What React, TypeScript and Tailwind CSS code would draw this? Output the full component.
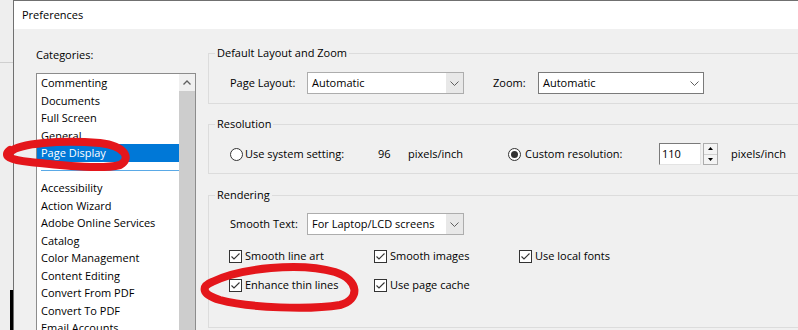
import React from 'react';

const categoriesTop = ['Commenting', 'Documents', 'Full Screen', 'General'];
const categoriesRest = [
  'Accessibility',
  'Action Wizard',
  'Adobe Online Services',
  'Catalog',
  'Color Management',
  'Content Editing',
  'Convert From PDF',
  'Convert To PDF',
  'Email Accounts',
];

const Chevron = () => (
  <svg width="9" height="5" viewBox="0 0 9 5">
    <path d="M0.5 0.5 L4.5 4.5 L8.5 0.5" stroke="#5f5f5f" fill="none" />
  </svg>
);

const Select: React.FC<{ value: string; width: string; shaded?: boolean }> = ({ value, width, shaded }) => (
  <div className={`${width} h-[22px] flex border ${shaded ? 'border-[#adadad]' : 'border-[#7a7a7a]'} bg-white`}>
    <div className="flex-1 pl-[4px] flex items-center leading-[16px]">{value}</div>
    <div className={`w-[17px] flex items-center justify-center ${shaded ? 'bg-[#e8e8e8]' : ''}`}>
      <Chevron />
    </div>
  </div>
);

const Checkbox: React.FC<{ label: string }> = ({ label }) => (
  <div className="w-[145px] h-[20px] flex items-center">
    <div className="w-[13px] h-[13px] border border-[#333333] bg-white flex items-center justify-center">
      <svg width="11" height="11" viewBox="0 0 11 11">
        <path d="M1.5 5.5 L4 8 L9.5 2.5" stroke="#333333" strokeWidth="1.1" fill="none" />
      </svg>
    </div>
    <span className="ml-[3px] leading-[16px]">{label}</span>
  </div>
);

const Radio: React.FC<{ checked?: boolean }> = ({ checked }) => (
  <div className="w-[13px] h-[13px] rounded-full border border-[#333333] bg-white flex items-center justify-center">
    {checked && <div className="w-[7px] h-[7px] rounded-full bg-[#333333]" />}
  </div>
);

export default function App() {
  return (
    <div className="relative w-[798px] h-[330px] overflow-hidden flex bg-[#f0f0f0] text-[11px] text-black font-['Open_Sans',sans-serif]">
      {/* desktop strip behind the dialog */}
      <div className="w-[13px] shrink-0 flex flex-col bg-[#eeeeee]">
        <div className="h-[62px] shrink-0" />
        <div className="h-px shrink-0 bg-[#cfcfcf]" />
        <div className="h-[227px] shrink-0" />
        <div className="ml-[10px] w-[3px] flex-1 bg-black" />
      </div>

      <div className="flex-1 min-h-0 flex flex-col border-l border-t border-[#707070]">
        {/* title bar */}
        <div className="h-[28px] shrink-0 bg-white pl-[8px] flex items-center">Preferences</div>

        <div className="flex-1 min-h-0 overflow-hidden flex">
          {/* categories */}
          <div className="w-[194px] shrink-0 pl-[22px]">
            <div className="mt-[18px] leading-[16px]">Categories:</div>
            <div className="mt-[10px] w-[160px] h-[300px] border border-[#8c8c8c] bg-white flex">
              <div className="w-[142px] leading-[17.5px]">
                {categoriesTop.map((c) => (
                  <div key={c} className="h-[17.5px] pl-[4px]">{c}</div>
                ))}
                <div className="h-[17.5px] pl-[4px] bg-[#0078d7] text-white">Page Display</div>
                <div className="h-[17.5px] pl-[4px] pt-[8px]">
                  <div className="h-px bg-[#5aa9e6]" />
                </div>
                {categoriesRest.map((c) => (
                  <div key={c} className="h-[17.5px] pl-[4px] whitespace-nowrap">{c}</div>
                ))}
              </div>
              <div className="w-[16px] flex flex-col bg-[#f0f0f0]">
                <div className="h-[17px] flex items-center justify-center">
                  <svg width="8" height="5" viewBox="0 0 8 5">
                    <path d="M0.5 4.5 L4 1 L7.5 4.5" stroke="#606060" strokeWidth="1.3" fill="none" />
                  </svg>
                </div>
                <div className="flex-1 bg-[#cdcdcd]" />
              </div>
            </div>
          </div>

          {/* settings */}
          <div className="flex-1">
            <fieldset className="mt-[16px] w-[620px] border border-[#dcdcdc]">
              <legend className="ml-[6px] px-[2px] leading-[16px]">Default Layout and Zoom</legend>
              <div className="pl-[21px] pt-[11px] pb-[9px] flex items-center">
                <div className="w-[77px] leading-[16px]">Page Layout:</div>
                <Select value="Automatic" width="w-[157px]" shaded />
                <div className="ml-[29px] w-[45px] leading-[16px]">Zoom:</div>
                <Select value="Automatic" width="w-[166px]" />
              </div>
            </fieldset>

            <fieldset className="mt-[12px] w-[620px] border border-[#dcdcdc]">
              <legend className="ml-[6px] px-[2px] leading-[16px]">Resolution</legend>
              <div className="pl-[21px] pt-[11px] pb-[8px] flex items-center">
                <Radio />
                <div className="ml-[2px] w-[133px] leading-[16px]">Use system setting:</div>
                <div className="w-[30px] leading-[16px]">96</div>
                <div className="w-[100px] leading-[16px]">pixels/inch</div>
                <Radio checked />
                <div className="ml-[4px] w-[134px] leading-[16px]">Custom resolution:</div>
                <div className="w-[42px] h-[22px] bg-white border border-t-[#7a7a7a] border-l-[#7a7a7a] border-r-[#e3e3e3] border-b-[#e3e3e3] pl-[2px] flex items-center leading-[16px]">
                  110
                </div>
                <div className="ml-[2px] w-[15px] h-[22px] flex flex-col border border-[#acacac] bg-[#f4f4f4]">
                  <div className="flex-1 flex items-center justify-center border-b border-[#d0d0d0]">
                    <svg width="5" height="3" viewBox="0 0 5 3"><path d="M0 3 L2.5 0 L5 3 Z" fill="#000" /></svg>
                  </div>
                  <div className="flex-1 flex items-center justify-center">
                    <svg width="5" height="3" viewBox="0 0 5 3"><path d="M0 0 L2.5 3 L5 0 Z" fill="#000" /></svg>
                  </div>
                </div>
                <div className="ml-[13px] leading-[16px]">pixels/inch</div>
              </div>
            </fieldset>

            <fieldset className="mt-[13px] w-[620px] border border-[#dcdcdc]">
              <legend className="ml-[6px] px-[2px] leading-[16px]">Rendering</legend>
              <div className="pl-[21px] pt-[10px] pb-[32px]">
                <div className="flex items-center">
                  <div className="w-[77px] leading-[16px]">Smooth Text:</div>
                  <Select value="For Laptop/LCD screens" width="w-[157px]" shaded />
                </div>
                <div className="mt-[11px] -ml-[1px] flex">
                  <Checkbox label="Smooth line art" />
                  <Checkbox label="Smooth images" />
                  <Checkbox label="Use local fonts" />
                </div>
                <div className="mt-[9px] -ml-[1px] flex">
                  <Checkbox label="Enhance thin lines" />
                  <Checkbox label="Use page cache" />
                </div>
              </div>
            </fieldset>
          </div>
        </div>
      </div>

      {/* red marker annotations */}
      <svg className="absolute inset-0 pointer-events-none" width="798" height="330" viewBox="0 0 798 330">
        <path
          d="M10 152 C 20 143, 60 140, 100 143 C 125 146, 132 158, 120 165 C 100 170, 60 165, 30 162 C 10 160, 2 156, 10 150"
          stroke="#e4161b"
          strokeWidth="8"
          strokeLinecap="round"
          fill="none"
        />
        <path
          d="M212 282 C 240 268, 300 262, 335 272 C 360 280, 360 300, 340 305 C 310 310, 250 308, 220 300 C 200 294, 202 286, 212 282 Z"
          stroke="#e4161b"
          strokeWidth="8"
          strokeLinecap="round"
          fill="none"
        />
      </svg>
    </div>
  );
}
